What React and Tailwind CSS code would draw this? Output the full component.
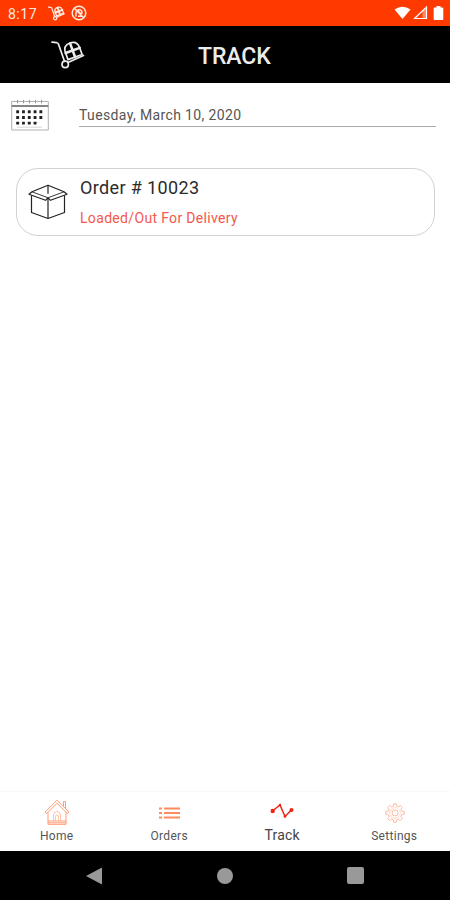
import React from "react";

function HandTruck({ className, strokeWidth = 1.7 }) {
  return (
    <svg className={className} viewBox="0 0 34 30" fill="none" stroke="currentColor" strokeWidth={strokeWidth} strokeLinecap="round" strokeLinejoin="round">
      <path d="M1 2.200l4.800.5q1.200.3 1.700 1.500l5.900 16.800" />
      <circle cx="14.200" cy="24.400" r="3.200" />
      <path d="M17.500 22.300l15-6.800" />
      <g transform="rotate(-20 21.500 10)">
        <path d="M14 17.500V10Q14 2.500 21.500 2.500T29 10v7.500z" />
        <path d="M21.500 3v14.500M14 10.500h15" strokeWidth={strokeWidth * 1.500} />
      </g>
    </svg>
  );
}

function StatusBar() {
  return (
    <div className="flex h-[26px] items-center justify-between bg-[#ff3a00] pl-2 pr-[6px] text-[#ffe9e0]">
      <div className="flex items-center">
        <span className="w-[40px] pt-px text-[14px] leading-none tracking-[0.5px]">8:17</span>
        <HandTruck className="h-[15px] w-[17px]" strokeWidth={2.600} />
        <svg className="ml-[6px] size-4" viewBox="0 0 16 16" fill="none" stroke="currentColor" strokeWidth="1.500">
          <circle cx="8" cy="8" r="6.800" />
          <path d="M3 3l10 10M5 11.500V7.500a3.200 3.200 0 0 1 5.800-1.400v3M7 11.300h4M6.800 5.800l3 3" />
        </svg>
      </div>
      <div className="flex items-center gap-[2px] text-white">
        <svg className="h-[14px] w-[17px]" viewBox="0 0 17 14">
          <path d="M.5 3.400Q8.500-2 16.500 3.400L8.500 13z" fill="currentColor" />
        </svg>
        <svg className="h-[14px] w-[15px]" viewBox="0 0 15 14" fill="none" stroke="currentColor" strokeWidth="1.200">
          <path d="M1.500 12.500L13.500 1v11.500z" />
          <path d="M9.500 12.500V5l4-4v11.500z" fill="currentColor" fillOpacity=".4" stroke="none" />
        </svg>
        <svg className="ml-[3px] h-[14px] w-[11px]" viewBox="0 0 11 14">
          <path d="M3.500 0h4v1.500h2q.8 0 .8.800v10.900q0 .8-.8.800h-8q-.8 0-.8-.8V2.300q0-.8.800-.8h2z" fill="currentColor" />
        </svg>
      </div>
    </div>
  );
}

function CalendarIcon() {
  const dots = [[0, 5], [1, 5], [2, 4]].flatMap(([row, count]) =>
    Array.from({ length: count }, (_, col) => ({ x: 5.2 + col * 5.8, y: 11.3 + row * 5.7 }))
  );
  return (
    <svg className="h-[33px] w-[38px] shrink-0" viewBox="0 0 38 33" fill="none">
      <path d="M.7 2.500h36.600v28.500H.7z" stroke="#a8a8a8" strokeWidth=".9" />
      <path d="M.7 7h36.600" stroke="#858585" strokeWidth="2" />
      <path d="M6.500.8v3.500M12.500.8v3.500M18.500.8v3.500M24.500.8v3.500M30.500.8v3.500" stroke="#999" strokeWidth="1" />
      <path d="M6 28.200h25" stroke="#ccc" strokeWidth=".8" />
      {dots.map((d) => (
        <rect key={`${d.x}-${d.y}`} x={d.x} y={d.y} width="2.900" height="2.900" rx=".5" fill="#222" />
      ))}
    </svg>
  );
}

function BoxIcon() {
  return (
    <svg className="h-[36px] w-[40px] shrink-0" viewBox="0 0 40 36" fill="none" stroke="#222" strokeWidth="1.200" strokeLinejoin="round">
      <path d="M20 1.200L4 7.800l-3 2.500 16.500 6L20 13.800l2.500 2.500 16.500-6-3-2.500z" />
      <path d="M4 7.800l16 6 16-6" strokeWidth=".9" />
      <path d="M3.500 11.500v17L20 34.500l16.500-6v-17M20 13.800v20.700M20 1.200v8.500" />
    </svg>
  );
}

function HomeIcon() {
  return (
    <svg className="h-[27px] w-[26px]" viewBox="0 0 26 27" fill="none" stroke="#ff9c73" strokeWidth="1">
      <path d="M1 13.200L13 1.200l12 12-1.700 1.300L13 4.300 2.700 14.500zM4 13.500v11.800h18V13.500M4 22h18M4 23.800h18M19.500 7V2.500h2V9" />
      <path d="M9.500 22v-6q0-3.500 3.500-3.500t3.500 3.500v6M11.500 22v-4q0-2 1.500-2t1.500 2v4" strokeWidth=".6" />
    </svg>
  );
}

function OrdersIcon() {
  return (
    <svg className="h-[12px] w-[21px]" viewBox="0 0 21 12" stroke="#ff8b5f" strokeWidth="1.900">
      <path d="M0 1.500h3M5 1.500h16M0 6h3M5 6h16M0 10.500h3M5 10.500h16" />
    </svg>
  );
}

function TrackIcon() {
  return (
    <svg className="mt-[-3px] h-[16px] w-[24px]" viewBox="0 0 24 16" fill="none" stroke="#ee2415" strokeWidth="1.500">
      <path d="M2.500 8L10 2l5 11.500 7-7.300" />
      <circle cx="2.700" cy="8" r="2.200" fill="#ee2415" stroke="none" />
      <circle cx="21.500" cy="7" r="2" fill="#ee2415" stroke="none" />
      <circle cx="10" cy="2" r="1.200" fill="#ee2415" stroke="none" />
      <circle cx="15" cy="13.500" r="1.300" fill="#ee2415" stroke="none" />
    </svg>
  );
}

function GearIcon() {
  return (
    <svg className="ml-px h-[20px] w-[20px]" viewBox="0 0 20 20" fill="none" stroke="#ffb298" strokeWidth=".9">
      <path d="M8.300 3.200L8.800.800h2.400l.5 2.400 1.700.7 2-1.400 1.900 1.900-1.400 2 .7 1.700 2.600.7v2.400l-2.600.7-.7 1.700 1.400 2-1.900 1.900-2-1.400-1.700.7-.5 2.400H8.800l-.5-2.400-1.700-.7-2 1.400-1.900-1.900 1.400-2-.7-1.700-2.600-.7V8.800l2.600-.7.7-1.700-1.400-2 1.900-1.900 2 1.400z" />
      <circle cx="10" cy="10" r="5.300" strokeWidth=".5" />
      <circle cx="10" cy="10" r="3" />
    </svg>
  );
}

function Tab({ label, icon, active }) {
  return (
    <div className="flex flex-1 flex-col items-center">
      <div className="flex h-[32px] items-center justify-center pl-px pt-[3px]">{icon}</div>
      <span
        className={
          active
            ? "mt-[-1px] pl-[2px] text-[14px] leading-[18px] tracking-[0.2px] text-[#444]"
            : "pl-px text-[12px] leading-[18px] tracking-[0.3px] text-[#555]"
        }
      >
        {label}
      </span>
    </div>
  );
}

export default function App() {
  return (
    <div className="flex h-[900px] w-[450px] flex-col overflow-hidden bg-white font-['Roboto',sans-serif]">
      <StatusBar />
      <header className="flex h-[57px] items-center bg-black text-[#ececec]">
        <HandTruck className="ml-[51px] h-[30px] w-[34px]" />
        <h1 className="ml-[113px] pt-[4px] text-[23px] font-medium leading-none tracking-[-0.1px]">TRACK</h1>
      </header>
      <main className="flex-1">
        <div className="flex pl-[11px] pr-[14px] pt-4">
          <CalendarIcon />
          <div className="ml-[30px] h-[28px] flex-1 border-b border-[#aaa] pt-[6px] text-[14px] leading-[20px] tracking-[0.37px] text-[#555]">
            Tuesday, March 10, 2020
          </div>
        </div>
        <section className="ml-4 mr-[15px] mt-[36px] flex h-[68px] rounded-[22px] border border-[#d2d2d2] pl-[11px]">
          <div className="pt-[15px]">
            <BoxIcon />
          </div>
          <div className="ml-[12px] pt-[7px]">
            <h2 className="text-[18px] leading-[24px] tracking-[0.37px] text-[#2b2b2b]">Order # 10023</h2>
            <p className="mt-[8px] text-[14px] leading-[20px] tracking-[0.33px] text-[#f4584c]">Loaded/Out For Delivery</p>
          </div>
        </section>
      </main>
      <nav className="flex h-[60px] border-t border-[#f8f8f8] pt-[3px]">
        <Tab label="Home" icon={<HomeIcon />} />
        <Tab label="Orders" icon={<OrdersIcon />} />
        <Tab label="Track" icon={<TrackIcon />} active />
        <Tab label="Settings" icon={<GearIcon />} />
      </nav>
      <div className="flex h-[49px] items-center justify-between bg-black pl-[86px] pr-[86px]">
        <svg className="h-[18px] w-[17px]" viewBox="0 0 17 18">
          <path d="M0 9L16 .500v17z" fill="#999" />
        </svg>
        <div className="size-4 rounded-full bg-[#999]" />
        <div className="size-[17px] rounded-[2px] bg-[#999]" />
      </div>
    </div>
  );
}
